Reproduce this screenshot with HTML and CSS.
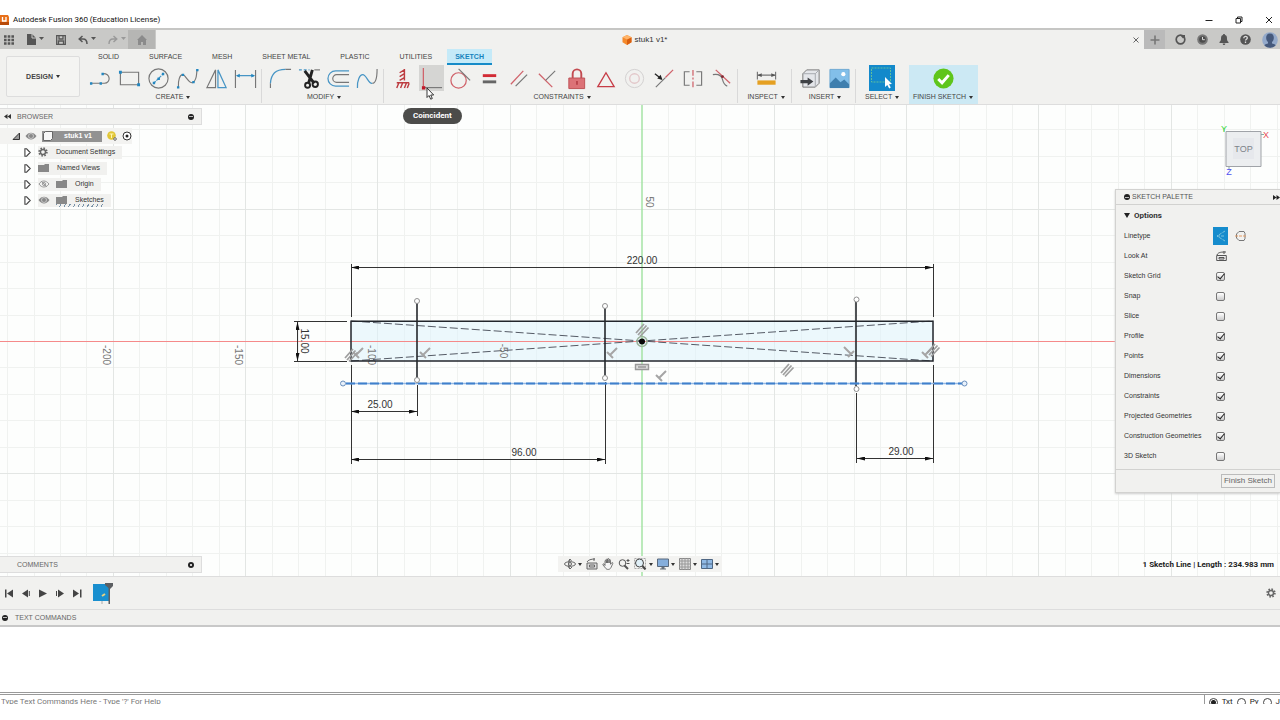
FILE: index.html
```html
<!DOCTYPE html>
<html lang="en">
<head>
<meta charset="utf-8">
<title>Autodesk Fusion 360 (Education License)</title>
<link rel="stylesheet" href="styles.css">
</head>
<body>
<div class="app">
  <header class="titlebar">
    <svg class="logo" width="9" height="10" viewBox="0 0 9 10"><path fill="#e8701a" d="M0 0h8l1 2v8H0z"/><path fill="#b84a08" d="M0 7h9v3H0z"/><path d="M2.500 2v4h3.500V2" fill="none" stroke="#fff" stroke-width="1.300"/></svg>
    <h1 class="app-title">Autodesk Fusion 360 (Education License)</h1>
    <div class="window-buttons">
      <button type="button" aria-label="Minimize"><svg width="10" height="10" viewBox="0 0 10 10"><path d="M1.500 5.500h7" stroke="#222"/></svg></button>
      <button type="button" aria-label="Restore"><svg width="10" height="10" viewBox="0 0 10 10" fill="none" stroke="#222"><path d="M2 3.500h4.500V8H2zM3.500 3.500V2H8v4.500H6.500"/></svg></button>
      <button type="button" aria-label="Close"><svg width="10" height="10" viewBox="0 0 10 10"><path d="M2 2l6 6M8 2L2 8" stroke="#222"/></svg></button>
    </div>
  </header>

  <div class="tabbar">
    <div class="quick">
      <button type="button" aria-label="Data panel"><svg width="10" height="10" viewBox="0 0 10 10"><path d="M0 1.500h10M0 5h10M0 8.500h10" stroke="#555" stroke-width="2.400" stroke-dasharray="2.600 1.100"/></svg></button>
      <button type="button" aria-label="File"><svg width="18" height="11" viewBox="0 0 18 11"><path fill="#555" d="M1 0h5l4 4v7H1z"/><path d="M6 0v4h4" stroke="#c9c9c7" fill="none"/><path fill="#555" d="M13 3h5l-2.500 3z"/></svg></button>
      <button type="button" aria-label="Save"><svg width="10" height="10" viewBox="0 0 10 10"><path d="M.7.7h8.600v8.600H.7zM3 1v3h4V1M2.500 9V6h5v3" fill="none" stroke="#555" stroke-width="1.300"/></svg></button>
      <button type="button" aria-label="Undo"><svg width="18" height="10" viewBox="0 0 18 10"><path d="M4.500 1L1.200 4l3.300 3M1.500 4H5c3 0 4 2 4 5" fill="none" stroke="#555" stroke-width="1.500"/><path fill="#555" d="M13 2h5l-2.500 3z"/></svg></button>
      <button type="button" aria-label="Redo"><svg width="18" height="10" viewBox="0 0 18 10"><path d="M5.500 1l3.300 3-3.300 3M8.500 4H5C2 4 1 6 1 9" fill="none" stroke="#999" stroke-width="1.400"/><path fill="#999" d="M13 2h5l-2.500 3z"/></svg></button>
      <button type="button" aria-label="Home" class="home"><svg width="10" height="10" viewBox="0 0 10 10"><path fill="#8b8b8b" d="M5 0l5 5H9v5H6V7H4v3H1V5H0z"/></svg></button>
    </div>
    <div class="document-tab">
      <span class="document-name"><svg width="10" height="10" viewBox="0 0 10 10"><path fill="#f58a2c" d="M5 0l4.500 2.200v5L5 10 .5 7.200v-5z"/><path fill="#d95f10" d="M5 4.500l4.500-2.300v5L5 10z"/><path fill="#ffb56b" d="M5 0l4.500 2.200L5 4.500.5 2.200z"/></svg>stuk1 v1*</span>
      <button type="button" aria-label="Close document"><svg width="6" height="6" viewBox="0 0 6 6"><path d="M.5.5l5 5M5.500.5l-5 5" stroke="#666"/></svg></button>
    </div>
    <div class="account">
      <button type="button" aria-label="New" class="new"><svg width="10" height="10" viewBox="0 0 10 10"><path d="M5 .5v9M.5 5h9" stroke="#777" stroke-width="1.600"/></svg></button>
      <button type="button" aria-label="Extensions"><svg width="11" height="11" viewBox="0 0 11 11"><circle cx="5.500" cy="5.500" r="4.300" fill="none" stroke="#555" stroke-width="1.700"/><path d="M5 1l3 3.500L10 3V1z" fill="#555"/></svg></button>
      <button type="button" aria-label="Job status"><svg width="11" height="11" viewBox="0 0 11 11"><circle cx="5.500" cy="5.500" r="5.300" fill="#777"/><circle cx="5.500" cy="5.500" r="3.300" fill="#4c4c4c"/><path d="M5.500 3v2.700h2.300" fill="none" stroke="#ddd"/></svg></button>
      <button type="button" aria-label="Notifications"><svg width="10" height="11" viewBox="0 0 10 11"><path fill="#555" d="M5 0c.8 0 1 .6 1 1.100C8 1.600 8 3.500 8 5c0 1.500.7 2.300 1.500 3v1h-9V8C1.300 7.300 2 6.500 2 5c0-1.500 0-3.400 2-3.900C4 .6 4.200 0 5 0zM3.700 9.500h2.600c0 2-2.600 2-2.600 0z"/></svg></button>
      <button type="button" aria-label="Help"><svg width="11" height="11" viewBox="0 0 11 11"><circle cx="5.500" cy="5.500" r="5.300" fill="#555"/><path d="M3.800 4.200c0-2.400 3.500-2.200 3.500-.2 0 1.300-1.800 1.200-1.800 2.600M5.500 7.500v1.400" fill="none" stroke="#ddd" stroke-width="1.300"/></svg></button>
      <button type="button" aria-label="Profile"><svg width="16" height="16" viewBox="0 0 16 16"><circle cx="8" cy="8" r="7.800" fill="#93a9ca"/><path fill="#45597c" d="M8 1.500c5 0 4.500 7 2 8.500v1.500c3 .7 3.500 1.500 3.500 2-3 3-8 3-11 0 0-.5.500-1.300 3.500-2V10C3.500 8.500 3 1.500 8 1.500z"/></svg></button>
    </div>
  </div>

  <div class="toolbar">
    <button type="button" class="workspace">DESIGN <i class="caret"></i></button>
    <div class="ribbon">
      <nav class="tabs">
        <button type="button" class="tab">SOLID</button>
        <button type="button" class="tab">SURFACE</button>
        <button type="button" class="tab">MESH</button>
        <button type="button" class="tab">SHEET METAL</button>
        <button type="button" class="tab">PLASTIC</button>
        <button type="button" class="tab">UTILITIES</button>
        <button type="button" class="tab active">SKETCH</button>
      </nav>
      <div class="groups">
        <section class="group">
          <div class="tools">
            <button type="button" aria-label="Line"><svg class="ico" viewBox="0 0 24 24"><path d="M2 17h10M14 7c9-1 9 10 2 10h-4" class="g"/><path class="p" d="M1 16h2.500v2.500H1zM11 16h2.500v2.500H11zM13 6h2.500v2.500H13z"/></svg></button>
            <button type="button" aria-label="Rectangle"><svg class="ico" viewBox="0 0 24 24"><path d="M2.500 5.500h19v13h-19z" class="g"/><path class="p" d="M1 4h3v3H1zM20 17h3v3h-3z"/></svg></button>
            <button type="button" aria-label="Circle"><svg class="ico" viewBox="0 0 24 24"><circle cx="12" cy="12" r="10" class="g"/><path d="M7 17L17 7" class="b" stroke-dasharray="3 1"/><path class="p" d="M6 15.500h2.500V18H6zM11 11h2.500v2.500H11zM15.500 6H18v2.500h-2.500z"/></svg></button>
            <button type="button" aria-label="Spline"><svg class="ico" viewBox="0 0 24 24"><path d="M2.500 21C2 14 4 8 7 8s7 11 11 8 3-7 4-13" class="g"/><path class="p" d="M1 20h2.500v2.500H1zM6 7h2.500v2.500H6zM17 14.500h2.500V17H17zM21 2h2.500v2.500H21z"/></svg></button>
            <button type="button" aria-label="Mirror"><svg class="ico" viewBox="0 0 24 24"><path d="M11 3v18.500H2z" class="g"/><path d="M13.500 3v18.500H22z" class="b"/></svg></button>
            <button type="button" aria-label="Sketch dimension"><svg class="ico" viewBox="0 0 24 24"><path d="M1.500 3v19M22.500 3v19" class="g"/><path d="M3 9h18" class="b"/><path class="p" d="M2 9l4-2v4zM22 9l-4-2v4z"/></svg></button>
          </div>
          <button type="button" class="group-label">CREATE <i class="caret"></i></button>
        </section>
        <section class="group">
          <div class="tools">
            <button type="button" aria-label="Fillet"><svg class="ico" viewBox="0 0 24 24"><path d="M1.500 22v-5M17 2.500h6" class="g"/><path d="M1.500 17C2 8 7 2.500 17 2.500" class="b"/></svg></button>
            <button type="button" aria-label="Trim"><svg class="ico" viewBox="0 0 24 24"><path d="M1 3h11" class="b" stroke-dasharray="3 2"/><path d="M17 3h6" class="g"/><path d="M7 4l10 13M15 3l-4 14" stroke="#222" stroke-width="3"/><g fill="none" stroke="#222" stroke-width="2"><circle cx="10" cy="19" r="2.600"/><circle cx="18" cy="18" r="2.800"/></g></svg></button>
            <button type="button" aria-label="Offset"><svg class="ico" viewBox="0 0 24 24"><path d="M23 4H9a8 8 0 0 0 0 16h14" class="b"/><path d="M23 8H10a4 4 0 0 0 0 8h13" class="g"/></svg></button>
            <button type="button" aria-label="Curve"><svg class="ico" viewBox="0 0 24 24"><path d="M1.500 22C1 14 4 8 7 8c4 0 6 10 10 9" class="b"/><path d="M17 17c4 0 5-7 5-15" class="g"/></svg></button>
          </div>
          <button type="button" class="group-label">MODIFY <i class="caret"></i></button>
        </section>
        <section class="group">
          <div class="tools">
            <button type="button" aria-label="Horizontal/Vertical"><svg class="ico" viewBox="0 0 24 24"><path d="M14 2v12M14 3l-5 3M14 7l-5 3M14 11l-5 3M6 16.500h13M8 17l-2 5M12 17l-2 5M16 17l-2 5M19 17l-2 5" fill="none" stroke="#bd3c40" stroke-width="1.500"/></svg></button>
            <button type="button" aria-label="Coincident" aria-describedby="tip" class="hovered"><svg class="ico" viewBox="0 0 24 24"><path d="M3.500 1v19" class="r"/><path d="M4 21.500h19" class="g"/><path d="M2 20h3.500v3.500H2z" fill="#c01828"/></svg></button>
            <button type="button" aria-label="Tangent"><svg class="ico" viewBox="0 0 24 24"><circle cx="10" cy="14" r="8" class="r"/><path d="M10 2l12 12" class="g"/></svg></button>
            <button type="button" aria-label="Equal"><svg class="ico" viewBox="0 0 24 24"><path d="M5 9h14" stroke="#d22b35" stroke-width="3"/><path d="M5 15.500h14" stroke="#666" stroke-width="3"/></svg></button>
            <button type="button" aria-label="Parallel"><svg class="ico" viewBox="0 0 24 24"><path d="M4 18L17 4" class="r"/><path d="M9 20L21 8" class="g"/></svg></button>
            <button type="button" aria-label="Perpendicular"><svg class="ico" viewBox="0 0 24 24"><path d="M3 7l14 14" class="r"/><path d="M10 14L20 4" class="g"/></svg></button>
            <button type="button" aria-label="Fix"><svg class="ico" viewBox="0 0 24 24"><path d="M8 12V7a4.500 4.500 0 0 1 9 0v5" fill="none" stroke="#c34b51" stroke-width="2"/><path d="M4 11.500h16.500v11H4z" fill="#dc7277" stroke="#bd5055"/><path d="M12.500 14.500v4" stroke="#ad353d" stroke-width="1.500"/></svg></button>
            <button type="button" aria-label="Midpoint"><svg class="ico" viewBox="0 0 24 24"><path d="M12.500 6L21 20.500H4z" fill="none" stroke="#c73d47" stroke-width="1.400"/></svg></button>
            <button type="button" aria-label="Concentric"><svg class="ico" viewBox="0 0 24 24"><g fill="none"><circle cx="12" cy="12" r="9.500" stroke="#d2d0d0"/><circle cx="12" cy="12" r="5" stroke="#e3c8ca" stroke-width="1.400"/></g></svg></button>
            <button type="button" aria-label="Collinear"><svg class="ico" viewBox="0 0 24 24"><path d="M4 21l10-10" class="g"/><path d="M14 11l8-8" class="r"/><path d="M3 7l5 4" stroke="#222" stroke-width="1.300"/><path d="M11 13.500L5.500 12 9 8z" fill="#222"/></svg></button>
            <button type="button" aria-label="Symmetry"><svg class="ico" viewBox="0 0 24 24"><path d="M9 5H3.500v14H9M16 5h5.500v14H16" class="g"/><path d="M12.500 3v19" class="r" stroke-dasharray="6 2 2 2"/></svg></button>
            <button type="button" aria-label="Curvature"><svg class="ico" viewBox="0 0 24 24"><path d="M6 3l15 14" class="r"/><path d="M3 8c6-1 9 1 10 5s2 6 5 7" class="g"/><circle cx="13" cy="10" r="1.500" fill="#832932"/></svg></button>
          </div>
          <button type="button" class="group-label">CONSTRAINTS <i class="caret"></i></button>
        </section>
        <section class="group inspect">
          <div class="tools">
            <button type="button" aria-label="Measure"><svg class="ico" viewBox="0 0 24 24"><path d="M2.500 5v8M21.500 5v8M3 8.500h18" class="g"/><path d="M2.500 8.500L7 6.500v4zM21.500 8.500L17 6.500v4z" fill="#555"/><path d="M2.500 14h19v4.500h-19z" fill="#e5a022"/></svg></button>
          </div>
          <button type="button" class="group-label">INSPECT <i class="caret"></i></button>
        </section>
        <section class="group">
          <div class="tools">
            <button type="button" aria-label="Insert derive"><svg class="ico" viewBox="0 0 24 24"><path d="M4 7l4-4h13v14l-4 4H4z" fill="#e4e6ea" stroke="#777"/><path d="M4 7h13v14M17 7l4-4" fill="none" stroke="#a5a8ad"/><path d="M9 11l6 4-6 4.500V17H1.500v-3.500H9z" fill="#3f4246"/></svg></button>
            <button type="button" aria-label="Insert image"><svg class="ico" viewBox="0 0 24 24"><path d="M2 2.500h20v19H2z" fill="#82bfe9" stroke="#70a9d2"/><path d="M2 17l6-6 5 5 4-3 5 5v4H2z" fill="#3f7fae"/><circle cx="16" cy="7.500" r="2.200" fill="#fff"/></svg></button>
          </div>
          <button type="button" class="group-label">INSERT <i class="caret"></i></button>
        </section>
        <section class="group select">
          <div class="tools">
            <button type="button" aria-label="Select"><svg class="ico big" viewBox="0 0 26 26"><path d="M0 0h26v26H0z" fill="#1389cb"/><path d="M2.500 3h19v14h-19z" fill="none" stroke="#61bf9d" stroke-dasharray="2 1"/><path d="M16 12l7 7-3 .2 1.800 3.300-1.600 1-1.900-3.500L16 22z" fill="#fff"/></svg></button>
          </div>
          <button type="button" class="group-label">SELECT <i class="caret"></i></button>
        </section>
        <section class="group finish">
          <div class="tools">
            <button type="button" aria-label="Finish Sketch"><svg class="ico" viewBox="0 0 24 24"><circle cx="12" cy="12" r="10.500" fill="#5fc51b"/><path d="M6.500 12.500l4 4 7-8" fill="none" stroke="#fff" stroke-width="3"/></svg></button>
          </div>
          <button type="button" class="group-label">FINISH SKETCH <i class="caret"></i></button>
        </section>
      </div>
    </div>
  </div>

  <main class="canvas">
    <svg class="drawing" viewBox="0 105 1280 471" preserveAspectRatio="xMidYMid slice">
      <defs>
        <marker id="arrow" viewBox="0 0 8 4" markerWidth="8" markerHeight="4" refX="8" refY="2" orient="auto-start-reverse" markerUnits="userSpaceOnUse"><path d="M0 0l8 2-8 2z" fill="#111"/></marker>
        <g id="perp" fill="none" stroke="#a5a5a5" stroke-width="2"><path d="M-5-1l6 6M-2 2l7-7"/></g>
        <g id="para" fill="none" stroke="#a0a0a0" stroke-width="1.800"><path d="M-6 3L2-6M-4 5L4.500-4.500M-2 6.500L6.500-2.500"/></g>
      </defs>
      <path class="minor" d="M7.500 105v471M34.500 105v471M60.500 105v471M86.500 105v471M139.500 105v471M166.500 105v471M192.500 105v471M219.500 105v471M272.500 105v471M298.500 105v471M325.500 105v471M351.500 105v471M404.500 105v471M430.500 105v471M457.500 105v471M483.500 105v471M536.500 105v471M563.500 105v471M589.500 105v471M616.500 105v471M668.500 105v471M695.500 105v471M721.500 105v471M748.500 105v471M801.500 105v471M827.500 105v471M854.500 105v471M880.500 105v471M933.500 105v471M959.500 105v471M986.500 105v471M1012.500 105v471M1065.500 105v471M1091.500 105v471M1118.500 105v471M1144.500 105v471M1197.500 105v471M1224.500 105v471M1250.500 105v471M1277.500 105v471M0 129.500h1280M0 156.500h1280M0 182.500h1280M0 235.500h1280M0 262.500h1280M0 288.500h1280M0 315.500h1280M0 367.500h1280M0 394.500h1280M0 420.500h1280M0 447.500h1280M0 500.500h1280M0 526.500h1280M0 553.500h1280"/>
      <path class="major" d="M113.500 105v471M245.500 105v471M377.500 105v471M510.500 105v471M774.500 105v471M906.500 105v471M1038.500 105v471M1171.500 105v471M0 209.500h1280M0 473.500h1280"/>
      <path d="M351 321.500h582v39H351z" fill="#dff3fb" fill-opacity=".55"/>
      <path d="M0 341.500h1280" stroke="#f58a8a"/>
      <path d="M642 105v471" stroke="#a5e3a5" stroke-width="1.500"/>
      <g class="scale">
        <text transform="translate(646 202) rotate(90)">50</text>
        <text transform="translate(103 355) rotate(90)">-200</text>
        <text transform="translate(235 355) rotate(90)">-150</text>
        <text transform="translate(368 355) rotate(90)">-100</text>
        <text transform="translate(500 351) rotate(90)">-50</text>
      </g>
      <path d="M351 321l582 40M351 361l582-40" fill="none" stroke="#555b66" stroke-dasharray="8 3"/>
      <path d="M351 321.300h582v39.700H351z" fill="none" stroke="#22262c" stroke-width="1.500"/>
      <g fill="none" stroke="#333"><path d="M351.500 264v53M933.500 264v53M351.500 365v99M294 321.500h53M294 361.500h53M417.500 385v31M605.500 382v82M856.500 393v70M933.500 365v98"/>
      <g marker-start="url(#arrow)" marker-end="url(#arrow)"><path d="M351 267.500h582"/><path d="M297.500 322v39"/><path d="M351 411.500h66"/><path d="M351 459.500h254"/><path d="M857 458.500h76"/></g></g>
      <path d="M417 303v75M605 308v67M856 302v84" stroke="#25282c" stroke-width="1.600"/>
      <path d="M346 383.500h616" stroke="#93b9e6" stroke-width="1.500"/><path d="M346 383.500h616" stroke="#3f80cc" stroke-width="2" stroke-dasharray="9 3"/>
      <g fill="#fff" stroke="#909090"><circle cx="417" cy="301" r="2.500"/><circle cx="417" cy="380" r="2.500"/><circle cx="605" cy="306" r="2.500"/><circle cx="605" cy="378" r="2.500"/><circle cx="856.500" cy="299.500" r="2.500"/><circle cx="856.500" cy="389" r="2.500"/></g>
      <g fill="#e8f1fb" stroke="#6b90bd"><circle cx="343" cy="383.500" r="2.500"/><circle cx="964.500" cy="383.500" r="2.500"/></g>
      <use href="#perp" x="425" y="353"/><use href="#perp" x="612" y="353"/><use href="#perp" x="661" y="376"/><use href="#perp" x="358" y="353"/><use href="#perp" x="927" y="353"/>
      <use href="#perp" transform="translate(849 352) scale(-1 1)"/>
      <use href="#para" x="642" y="330"/><use href="#para" x="787" y="370"/><use href="#para" x="351" y="355"/><use href="#para" x="933" y="350"/>
      <path d="M635.500 364.500h13v5h-13zM638 367h8" fill="#ddd" stroke="#999" stroke-width="1.400"/>
      <circle cx="642" cy="341.500" r="5" fill="none" stroke="#9bb39b" stroke-width="1.600"/><circle cx="642" cy="341.500" r="3" fill="#080808"/>
      <g class="values"><text x="642" y="264">220.00</text><text x="380" y="408">25.00</text><text x="524" y="456">96.00</text><text x="901" y="455">29.00</text><text transform="translate(301 341) rotate(90)">15.00</text></g>
    </svg>

    <aside class="browser">
      <div class="bar"><svg width="7" height="5" viewBox="0 0 7 5"><path fill="#333" d="M0 2.500L3.500 0v5zM3.500 2.500L7 0v5z"/></svg><span>BROWSER</span><button type="button" class="dot" aria-label="Collapse"></button></div>
      <ul class="tree">
        <li class="root"><svg width="8" height="8" viewBox="0 0 8 8"><path d="M7.500 1v6.500H1z" fill="#999" stroke="#333"/></svg><svg class="eye" viewBox="0 0 12 8"><use href="#eye"/></svg><span class="doc"><svg width="10" height="10" viewBox="0 0 10 10"><path d="M.5 2.500l2-2h7v7l-2 2h-7z" fill="#f6f6f6" stroke="#666"/></svg><b>stuk1 v1</b></span><svg width="10" height="10" viewBox="0 0 10 10"><circle cx="4.500" cy="4.500" r="4.300" fill="#e1c637"/><path d="M2.500 3h4M4.500 3v4" stroke="#fff7b5"/><circle cx="8" cy="8" r="1.300" fill="#fff" stroke="#666"/></svg><svg width="10" height="10" viewBox="0 0 10 10"><circle cx="5" cy="5" r="4" fill="#fff" stroke="#333"/><circle cx="5" cy="5" r="1.500" fill="#222"/></svg></li>
        <li><svg class="twist" viewBox="0 0 6 8"><path d="M.7.7v6.600h1.500L5.400 4 2.200.7z"/></svg><span class="node"><svg width="10" height="10" viewBox="0 0 10 10"><circle cx="5" cy="5" r="3.700" fill="none" stroke="#666" stroke-width="2" stroke-dasharray="1.500 1.400"/><circle cx="5" cy="5" r="2.500" fill="none" stroke="#666" stroke-width="1.400"/></svg><span>Document Settings</span></span></li>
        <li><svg class="twist" viewBox="0 0 6 8"><path d="M.7.7v6.600h1.500L5.400 4 2.200.7z"/></svg><span class="node"><svg class="folder" viewBox="0 0 11 8"><path d="M0 1h6l1-1h4v8H0z"/></svg><span>Named Views</span></span></li>
        <li><svg class="twist" viewBox="0 0 6 8"><path d="M.7.7v6.600h1.500L5.400 4 2.200.7z"/></svg><span class="node"><svg class="eye" viewBox="0 0 12 8"><path d="M1 4c2.500-4 7-4 10 0-3 4-7.500 4-10 0M3 1l6 6" fill="none" stroke="#999"/><circle cx="6" cy="4" r="1.500" fill="none" stroke="#999"/></svg><svg class="folder" viewBox="0 0 11 8"><path d="M0 1h6l1-1h4v8H0z"/></svg><span>Origin</span></span></li>
        <li><svg class="twist" viewBox="0 0 6 8"><path d="M.7.7v6.600h1.500L5.400 4 2.200.7z"/></svg><span class="node"><svg class="eye" viewBox="0 0 12 8"><g id="eye"><path d="M.5 4c3-4.500 8-4.500 11 0-3 4.500-8 4.500-11 0" fill="#888"/><circle cx="6" cy="4" r="2.500" fill="none" stroke="#d5d5d5" stroke-width=".8"/></g></svg><span class="hatched"><svg class="folder" viewBox="0 0 11 8"><path d="M0 1h6l1-1h4v8H0z"/></svg><span>Sketches</span></span></span></li>
      </ul>
    </aside>

    <div class="bar comments"><span>COMMENTS</span><button type="button" class="dot plus" aria-label="Add comment"></button></div>

    <svg class="viewcube" viewBox="0 0 52 58">
      <path d="M10 9.500h35v35H10z" fill="#eceef0" stroke="#a0a3a8"/><path d="M17 16h21v21H17z" fill="#e2e5ea" fill-opacity=".6"/>
      <path d="M8 9.500v-4M45 12.500h3M13 45v3" stroke="#8aa"/>
      <text x="27.500" y="30" fill="#7d838a" font-size="9">TOP</text>
      <text x="8" y="10" fill="#3fe03f" font-size="9">Y</text>
      <text x="50" y="16" fill="#e8505a" font-size="9">X</text>
      <text x="13" y="53" fill="#5050f0" font-size="9">Z</text>
    </svg>

    <aside class="palette">
      <div class="palette-head"><i class="dot"></i><span>SKETCH PALETTE</span><svg width="7" height="5" viewBox="0 0 7 5"><path fill="#222" d="M0 0l3.500 2.500L0 5zM3.500 0L7 2.500 3.500 5z"/></svg></div>
      <div class="options">
        <h2><svg width="6" height="5" viewBox="0 0 6 5"><path d="M0 0h6L3 5z" fill="#222"/></svg>Options</h2>
        <div class="row"><span>Linetype</span><span class="linetypes"><button type="button" class="on" aria-label="Normal"><svg width="12" height="12" viewBox="0 0 12 12"><path d="M10 1L2 6l8 5M2 6h8" fill="none" stroke="#7ac3de" stroke-dasharray="3 1"/></svg></button><button type="button" aria-label="Construction"><svg width="12" height="12" viewBox="0 0 12 12"><path d="M4 1.500h5l1 2v5l-1 2H4L1.500 8V4z" fill="none" stroke="#777"/><path d="M0 6h12" stroke="#e39b64" stroke-dasharray="3 1"/></svg></button></span></div>
        <div class="row"><span>Look At</span><button type="button" aria-label="Look At"><svg width="11" height="10" viewBox="0 0 11 10"><path d="M.7 4.500h9.600v5H.7zM3 6.500h5v1.500H3z" fill="#eee" stroke="#555"/><path d="M1 4c1-3 5-3 9-3M8 0v3" fill="none" stroke="#555"/></svg></button></div>
        <label class="row"><span>Sketch Grid</span><input type="checkbox" checked></label>
        <label class="row"><span>Snap</span><input type="checkbox"></label>
        <label class="row"><span>Slice</span><input type="checkbox"></label>
        <label class="row"><span>Profile</span><input type="checkbox" checked></label>
        <label class="row"><span>Points</span><input type="checkbox" checked></label>
        <label class="row"><span>Dimensions</span><input type="checkbox" checked></label>
        <label class="row"><span>Constraints</span><input type="checkbox" checked></label>
        <label class="row"><span>Projected Geometries</span><input type="checkbox" checked></label>
        <label class="row"><span>Construction Geometries</span><input type="checkbox" checked></label>
        <label class="row"><span>3D Sketch</span><input type="checkbox"></label>
      </div>
      <div class="palette-foot"><button type="button">Finish Sketch</button></div>
    </aside>

    <div class="viewbar">
      <button type="button" aria-label="Orbit"><svg width="12" height="12" viewBox="0 0 12 12" fill="none" stroke="#666"><ellipse cx="6" cy="6" rx="5.500" ry="2.300"/><path d="M6 1c-2 2-2 8 0 10M5 3l1-2 1.500 2M4 8l2 3 2-2"/><circle cx="6" cy="6" r="1.500"/></svg><i class="caret"></i></button>
      <button type="button" aria-label="Look at"><svg width="12" height="12" viewBox="0 0 12 12" fill="#ddd" stroke="#666"><path d="M1 5h10v6H1zM3.500 7h5v2h-5z"/><path d="M1 4c1-2 4-3 8-3M8 0v3" fill="none"/></svg></button>
      <button type="button" aria-label="Pan"><svg width="12" height="12" viewBox="0 0 12 12"><path d="M3 7.500V3c0-1 1.300-1 1.300 0v2V1.700c0-1 1.400-1 1.400 0V5 1.300c0-1 1.400-1 1.400 0V5 2.300c0-1 1.400-1 1.400 0v4l1.200-1.500c.8-.6 1.500 0 1 .9L9 9.500C8 12 4.500 12 3.500 10L1 7c-.5-1 .5-1.500 1-1z" fill="#f6f6f6" stroke="#555" stroke-width=".8"/></svg></button>
      <button type="button" aria-label="Zoom"><svg width="12" height="12" viewBox="0 0 12 12" fill="none" stroke="#555"><circle cx="4.500" cy="5" r="3.300"/><path d="M6.500 7.500L10 11" stroke-width="2"/><path d="M8.500 2.500h3M10 1v3M8.500 5.500h3"/></svg></button>
      <button type="button" aria-label="Fit"><svg width="13" height="12" viewBox="0 0 13 12" fill="none" stroke="#444"><path d="M.5.5h11v10H.5z" stroke="#aaa" stroke-dasharray="2 1"/><circle cx="5.500" cy="5" r="4" fill="#e0f0f8"/><path d="M8.500 8l3 3.500" stroke-width="2"/></svg><i class="caret"></i></button>
      <button type="button" aria-label="Display"><svg width="12" height="12" viewBox="0 0 12 12"><path d="M.5 1h11v7.500H.5z" fill="#85aedc" stroke="#59697d"/><path d="M4.500 9h3v1.500H9v1H3v-1h1.500z" fill="#69727c"/></svg><i class="caret"></i></button>
      <button type="button" aria-label="Grid"><svg width="12" height="12" viewBox="0 0 12 12"><path d="M.5.5h11v11H.5z" fill="#ddd" stroke="#888"/><path d="M3 0v12M6 0v12M9 0v12M0 3h12M0 6h12M0 9h12" stroke="#999"/></svg><i class="caret"></i></button>
      <button type="button" aria-label="Viewports"><svg width="12" height="12" viewBox="0 0 12 12"><path d="M.5 1.500h11v9H.5z" fill="#8fb9e5" stroke="#4e6784"/><path d="M6 1v10M0 6h12" stroke="#4e6784"/></svg><i class="caret"></i></button>
    </div>
    <output class="status">1 Sketch Line | Length : 234.983 mm</output>
    <div class="tooltip" id="tip" role="tooltip">Coincident</div>
    <svg class="cursor" width="9" height="13" viewBox="0 0 9 13"><path d="M1 1v9.500l2-2 1.700 3.700 1.600-.7L4.700 8h3z" fill="#fff" stroke="#222" stroke-width=".9"/></svg>
  </main>

  <footer class="timeline">
    <div class="playback">
      <button type="button" aria-label="Start"><svg class="play" viewBox="0 0 10 8"><path d="M1 0h1.500v8H1zM9 0v8L3 4z"/></svg></button>
      <button type="button" aria-label="Back"><svg class="play" viewBox="0 0 10 8"><path d="M7 0v8L1 4zM7.800 1.500h1v5h-1z"/></svg></button>
      <button type="button" aria-label="Play"><svg class="play" viewBox="0 0 10 8"><path d="M1 0l8 4-8 4z"/></svg></button>
      <button type="button" aria-label="Forward"><svg class="play" viewBox="0 0 10 8"><path d="M3 0v8l6-4zM1 1.500h1v5H1z"/></svg></button>
      <button type="button" aria-label="End"><svg class="play" viewBox="0 0 10 8"><path d="M8 0h1.500v8H8zM1 0v8l6-4z"/></svg></button>
    </div>
    <button type="button" class="feature" aria-label="Sketch1"><svg width="22" height="22" viewBox="0 0 22 22"><path d="M0 2h16v17H0z" fill="#198fcf"/><path d="M9 19v3" stroke="#aaa"/><path d="M9 14l3-2" stroke="#e7d282" stroke-width="2"/><path d="M12 1h8v3l-3 3v15h-1.500V6L12 3z" fill="#5c5f62"/></svg></button>
    <button type="button" class="settings" aria-label="Timeline settings"><svg width="10" height="10" viewBox="0 0 10 10"><circle cx="5" cy="5" r="3.700" fill="none" stroke="#666" stroke-width="2" stroke-dasharray="1.500 1.400"/><circle cx="5" cy="5" r="2.500" fill="none" stroke="#666" stroke-width="1.400"/></svg></button>
  </footer>
  <section class="console">
    <div class="console-head"><i class="dot"></i><h2>TEXT COMMANDS</h2></div>
    <div class="console-log"></div>
    <div class="console-input">
      <input type="text" aria-label="Text command" placeholder="Type Text Commands Here - Type '?' For Help">
      <label><input type="radio" name="mode" checked>Txt</label>
      <label><input type="radio" name="mode">Py</label>
      <label><input type="radio" name="mode">J</label>
    </div>
  </section>
</div>
</body>
</html>
```
FILE: styles.css
```css
* { box-sizing: border-box; }
body { margin: 0; background: #fff; color: #444; font: 7px/10px "Liberation Sans", Arial, sans-serif; }
button { border: 0; padding: 0; margin: 0; background: none; color: inherit; font: inherit; white-space: nowrap; }
h1, h2, ul { margin: 0; padding: 0; font: inherit; list-style: none; }
svg { display: block; flex: none; }
.app { display: flex; flex-direction: column; height: 100vh; padding: 12px 0 16px; overflow: hidden; }
.caret { display: inline-block; margin-left: 1px; border: 2px solid transparent; border-top: 3px solid #333; border-bottom: 0; vertical-align: middle; }
.dot { width: 6px; height: 6px; border-radius: 50%; background: linear-gradient(#bbb, #bbb) center / 4px 1px no-repeat #222; }
.plus { background: radial-gradient(circle, #ccc 1px, #222 1px); }

.titlebar { display: flex; align-items: center; height: 16px; flex: none; }
.app-title { margin-left: 4px; color: #111; font: 8px/12px Roboto, sans-serif; }
.window-buttons { display: flex; gap: 20px; margin-left: auto; padding-right: 6px; }
.tabbar { display: flex; height: 21px; flex: none; background: #c9c9c7; border-top: 2px solid #c6c6c4; }
.quick { display: flex; align-items: center; padding-left: 4px; gap: 12px; }
.quick .home { display: grid; place-items: center; width: 27px; height: 100%; margin-left: -10px; background: #b6b6b4; }
.document-tab { display: flex; align-items: center; flex: 1; margin-left: 1px; padding-right: 5px; background: #f1f1ef; }
.document-name { display: flex; align-items: center; gap: 3px; margin: 0 auto; color: #333; font-size: 8px; }
.account { display: flex; align-items: center; gap: 11px; padding-right: 2px; }
.account .new { display: grid; place-items: center; width: 21px; height: 100%; background: #bababa; margin-right: -1px; }

.toolbar { display: flex; flex: none; height: 56px; background: #f1f1ef; border-bottom: 1px solid #ddd; }
.workspace { width: 74px; height: 41px; margin: 7px 3px 0 6px; border: 1px solid #ddd; border-radius: 2px; font-weight: bold; background: #f4f4f2; }
.tabs { display: flex; height: 16px; }
.tab { padding: 0 15px; }
.tab.active { padding: 2px 8px 0; color: #1583bd; font-weight: bold; background: #c5eaf8; border-bottom: 2px solid #168bc8; }
.groups { display: flex; }
.group { display: flex; flex-direction: column; padding: 0 2px 0 3px; background: linear-gradient(#d9d9d9, #d9d9d9) right 4px / 1px 34px no-repeat; border-right: 1px solid transparent; }
.tools { display: flex; justify-content: center; height: 26px; }
.tools button { display: grid; place-items: center; width: 29px; height: 26px; }
.tools .hovered { width: 25px; margin: 0 2px; background: #d5d5d3; }
.ico { width: 23px; height: 23px; }
.ico.big { width: 26px; height: 26px; }
.g { fill: none; stroke: #777; stroke-width: 1.2; }
.b { fill: none; stroke: #4795c5; stroke-width: 1.3; }
.p { fill: #2387c0; }
.r { fill: none; stroke: #d0626a; stroke-width: 1.3; }
.group-label { height: 13px; line-height: 11px; padding-bottom: 2px; }
.inspect { width: 54px; }
.select { width: 50px; background: none; }
.finish { width: 69px; margin-left: 2px; padding: 0; background: #cce9f4; }

.canvas { position: relative; flex: 1; min-height: 0; background: #fdfefd; }
.drawing { position: absolute; inset: 0; width: 100%; height: 100%; }
.minor { stroke: #f0f2f0; }
.major { stroke: #e3e6e4; }
.scale text, .values text { font-size: 10px; text-anchor: middle; fill: #777; }
.values text { fill: #333; }
.bar { display: flex; align-items: center; height: 17px; padding: 0 7px 0 4px; background: #f1f1ef; border: 1px solid #ddd; border-left: 0; color: #666; }
.bar span { margin-left: 6px; }
.bar .dot { margin-left: auto; }
.browser { position: absolute; left: 0; top: 3px; width: 202px; }
.comments { position: absolute; left: 0; bottom: 3px; width: 202px; }
.comments span { margin-left: 13px; }
.tree { padding-top: 3px; }
.tree li { display: flex; align-items: center; height: 16px; padding-left: 24px; gap: 7px; color: #333; }
.tree .root { width: 132px; padding-left: 12px; gap: 5px; background: #f3f3f1; }
.doc { display: flex; align-items: center; width: 60px; height: 11px; gap: 11px; padding-left: 1px; background: #929292; color: #fff; }
.node { display: flex; align-items: center; height: 13px; padding-right: 7px; gap: 6px; background: #f1f1ef; }
.node > span { margin-left: 2px; }
.node > .hatched { margin-left: 0; }
.twist { width: 7px; height: 9px; fill: #fff; stroke: #444; }
.eye { width: 12px; height: 8px; }
.folder { width: 11px; height: 8px; fill: #888; }
.hatched { display: flex; align-items: center; height: 13px; gap: 8px; background: repeating-linear-gradient(120deg, #7892a8 0 1px, transparent 1px 4px) bottom / 100% 3px no-repeat; }
.viewcube { position: absolute; right: 12px; top: 17px; width: 52px; height: 58px; overflow: visible; }
.viewcube text { text-anchor: middle; }

.palette { position: absolute; right: 0; top: 84px; width: 165px; background: #f1f1ef; border: 1px solid #d2d2d0; border-right: 0; color: #333; box-shadow: 0 1px 2px #ccc; }
.palette-head { display: flex; align-items: center; height: 15px; padding-left: 8px; border-bottom: 1px solid #d2d2d0; gap: 2px; color: #555; }
.palette-head svg { margin-left: auto; }
.options { padding: 0 0 3px 8px; }
.options h2 { display: flex; align-items: center; height: 21px; gap: 4px; font: bold 8px/10px Roboto, sans-serif; }
.row { display: grid; grid-template-columns: 92px 1fr; align-items: center; height: 20px; }
.linetypes { display: flex; gap: 5px; margin-left: -3px; }
.linetypes button { display: grid; place-items: center; width: 15px; height: 18px; }
.linetypes .on { background: #168ccd; }
input[type="checkbox"] { appearance: none; width: 9px; height: 9px; margin: 0; border: 1px solid #777; border-radius: 2px; background: linear-gradient(#fff, #ccc); position: relative; }
input[type="checkbox"]:checked::after { content: ""; position: absolute; left: 2px; top: -1px; width: 3px; height: 6px; border: solid #222; border-width: 0 1px 1px 0; transform: rotate(40deg); }
.palette-foot { display: flex; justify-content: flex-end; border-top: 1px solid #d2d2d0; padding: 4px 5px; }
.palette-foot button { height: 14px; padding: 0 2px; border: 1px solid #bbb; color: #666; font-size: 8px; }
.viewbar { position: absolute; left: 50%; bottom: 4px; transform: translateX(-50%); display: flex; align-items: center; height: 16px; padding: 0 3px 0 6px; gap: 4px; background: #f3f3f1; }
.viewbar button { display: flex; align-items: center; gap: 1px; }
.status { position: absolute; right: 6px; bottom: 6px; color: #222; font: bold 8px/10px Roboto, sans-serif; }
.tooltip { position: absolute; left: 403px; top: 3px; padding: 3px 10px; border-radius: 8px; background: #4c4c4a; color: #fff; font: bold 8px/10px Roboto, sans-serif; }
.cursor { position: absolute; left: 426px; top: -18px; }

.timeline { display: flex; align-items: center; height: 33px; flex: none; padding: 0 4px; background: #f1f1ef; border-top: 1px solid #ddd; }
.playback { display: flex; gap: 7px; }
.play { width: 10px; height: 9px; fill: #444; }
.feature { margin-left: 11px; }
.settings { margin-left: auto; }
.console { flex: none; height: 95px; overflow: hidden; }
.console-head { display: flex; align-items: center; height: 18px; padding-left: 2px; gap: 7px; color: #666; background: #f1f1ef; border-top: 1px solid #ddd; border-bottom: 2px solid #c8c8c8; }
.console-log { height: 65px; }
.console-input { display: flex; height: 12px; overflow: hidden; border-top: 3px double #999; gap: 4px; }
.console-input input[type="text"] { flex: 1; min-width: 0; height: 14px; padding: 0 1px; border: 0; border-right: 1px solid #999; outline: 0; font: 8px/14px Roboto, sans-serif; }
.console-input input::placeholder { color: #777; opacity: 1; }
.console-input label { display: flex; align-items: center; gap: 4px; height: 14px; color: #222; font: 8px/14px Roboto, sans-serif; }
input[type="radio"] { appearance: none; width: 9px; height: 9px; margin: 0; border: 1px solid #444; border-radius: 50%; }
input[type="radio"]:checked { background: radial-gradient(circle, #222 2px, #fff 3px); }
```
